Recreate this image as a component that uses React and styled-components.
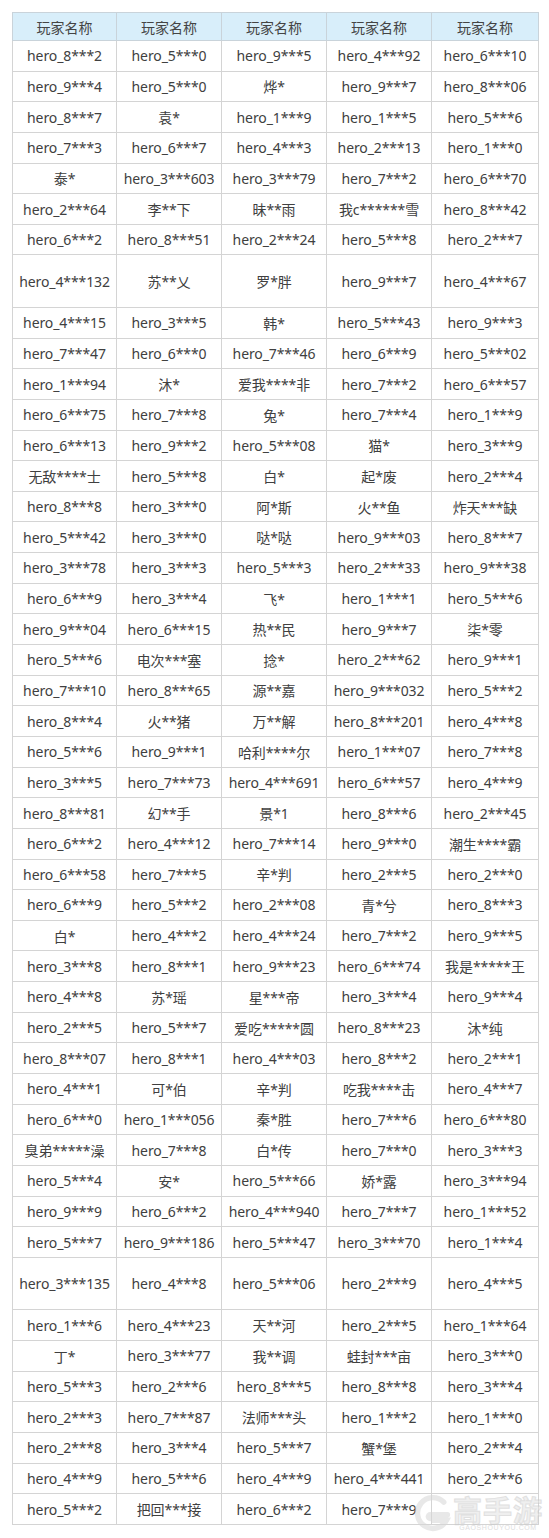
import styled, { createGlobalStyle } from "styled-components";

const GlobalStyle = createGlobalStyle`
  html, body {
    margin: 0;
    padding: 0;
    background: #fff;
  }
  body {
    font-family: "Noto Sans", "Noto Sans CJK SC", sans-serif;
  }
`;

const Page = styled.div`
  position: relative;
  width: 549px;
  height: 1538px;
  padding: 12px 0 0 12px;
  box-sizing: border-box;
  overflow: hidden;
`;

const Table = styled.table`
  border-collapse: collapse;
  table-layout: fixed;
  width: 526px;
  font-size: 14px;
  color: #404040;
`;

const HeadCell = styled.th`
  height: 27px;
  padding: 0;
  background: #d8eefa;
  border: 1px solid #c9d3da;
  font-weight: 400;
  color: #444;
  text-align: center;
`;

const Row = styled.tr`
  height: ${(p) => (p.$tall ? "52.5px" : "30.65px")};
`;

const Cell = styled.td`
  padding: 0 2px;
  border: 1px solid #d4d4d4;
  text-align: center;
  white-space: nowrap;
  letter-spacing: -0.1px;
`;

const Watermark = styled.div`
  position: absolute;
  right: 6px;
  bottom: 6px;
  display: flex;
  align-items: center;
  gap: 2px;
  opacity: 0.55;
  pointer-events: none;
`;

const MarkText = styled.div`
  display: flex;
  flex-direction: column;
  align-items: center;
`;

const MarkTitle = styled.span`
  font-family: "Noto Sans CJK SC", sans-serif;
  font-size: 29px;
  font-weight: 700;
  line-height: 28px;
  color: #e2e2e2;
  -webkit-text-stroke: 1px #c8c8c8;
  letter-spacing: 1px;
`;

const MarkUrl = styled.span`
  font-family: "Liberation Sans", sans-serif;
  font-size: 7px;
  line-height: 9px;
  color: #c4c4c4;
  letter-spacing: 0.6px;
`;

const rows = [
  ["hero_8***2", "hero_5***0", "hero_9***5", "hero_4***92", "hero_6***10"],
  ["hero_9***4", "hero_5***0", "烨*", "hero_9***7", "hero_8***06"],
  ["hero_8***7", "袁*", "hero_1***9", "hero_1***5", "hero_5***6"],
  ["hero_7***3", "hero_6***7", "hero_4***3", "hero_2***13", "hero_1***0"],
  ["泰*", "hero_3***603", "hero_3***79", "hero_7***2", "hero_6***70"],
  ["hero_2***64", "李**下", "昧**雨", "我c******雪", "hero_8***42"],
  ["hero_6***2", "hero_8***51", "hero_2***24", "hero_5***8", "hero_2***7"],
  ["hero_4***132", "苏**乂", "罗*胖", "hero_9***7", "hero_4***67", true],
  ["hero_4***15", "hero_3***5", "韩*", "hero_5***43", "hero_9***3"],
  ["hero_7***47", "hero_6***0", "hero_7***46", "hero_6***9", "hero_5***02"],
  ["hero_1***94", "沐*", "爱我****非", "hero_7***2", "hero_6***57"],
  ["hero_6***75", "hero_7***8", "兔*", "hero_7***4", "hero_1***9"],
  ["hero_6***13", "hero_9***2", "hero_5***08", "猫*", "hero_3***9"],
  ["无敌****士", "hero_5***8", "白*", "起*废", "hero_2***4"],
  ["hero_8***8", "hero_3***0", "阿*斯", "火**鱼", "炸天***缺"],
  ["hero_5***42", "hero_3***0", "哒*哒", "hero_9***03", "hero_8***7"],
  ["hero_3***78", "hero_3***3", "hero_5***3", "hero_2***33", "hero_9***38"],
  ["hero_6***9", "hero_3***4", "飞*", "hero_1***1", "hero_5***6"],
  ["hero_9***04", "hero_6***15", "热**民", "hero_9***7", "柒*零"],
  ["hero_5***6", "电次***塞", "捻*", "hero_2***62", "hero_9***1"],
  ["hero_7***10", "hero_8***65", "源**嘉", "hero_9***032", "hero_5***2"],
  ["hero_8***4", "火**猪", "万**解", "hero_8***201", "hero_4***8"],
  ["hero_5***6", "hero_9***1", "哈利****尔", "hero_1***07", "hero_7***8"],
  ["hero_3***5", "hero_7***73", "hero_4***691", "hero_6***57", "hero_4***9"],
  ["hero_8***81", "幻**手", "景*1", "hero_8***6", "hero_2***45"],
  ["hero_6***2", "hero_4***12", "hero_7***14", "hero_9***0", "潮生****霸"],
  ["hero_6***58", "hero_7***5", "辛*判", "hero_2***5", "hero_2***0"],
  ["hero_6***9", "hero_5***2", "hero_2***08", "青*兮", "hero_8***3"],
  ["白*", "hero_4***2", "hero_4***24", "hero_7***2", "hero_9***5"],
  ["hero_3***8", "hero_8***1", "hero_9***23", "hero_6***74", "我是*****王"],
  ["hero_4***8", "苏*瑶", "星***帝", "hero_3***4", "hero_9***4"],
  ["hero_2***5", "hero_5***7", "爱吃*****圆", "hero_8***23", "沐*纯"],
  ["hero_8***07", "hero_8***1", "hero_4***03", "hero_8***2", "hero_2***1"],
  ["hero_4***1", "可*伯", "辛*判", "吃我****击", "hero_4***7"],
  ["hero_6***0", "hero_1***056", "秦*胜", "hero_7***6", "hero_6***80"],
  ["臭弟*****澡", "hero_7***8", "白*传", "hero_7***0", "hero_3***3"],
  ["hero_5***4", "安*", "hero_5***66", "娇*露", "hero_3***94"],
  ["hero_9***9", "hero_6***2", "hero_4***940", "hero_7***7", "hero_1***52"],
  ["hero_5***7", "hero_9***186", "hero_5***47", "hero_3***70", "hero_1***4"],
  ["hero_3***135", "hero_4***8", "hero_5***06", "hero_2***9", "hero_4***5", true],
  ["hero_1***6", "hero_4***23", "天**河", "hero_2***5", "hero_1***64"],
  ["丁*", "hero_3***77", "我**调", "蛙封***亩", "hero_3***0"],
  ["hero_5***3", "hero_2***6", "hero_8***5", "hero_8***8", "hero_3***4"],
  ["hero_2***3", "hero_7***87", "法师***头", "hero_1***2", "hero_1***0"],
  ["hero_2***8", "hero_3***4", "hero_5***7", "蟹*堡", "hero_2***4"],
  ["hero_4***9", "hero_5***6", "hero_4***9", "hero_4***441", "hero_2***6"],
  ["hero_5***2", "把回***接", "hero_6***2", "hero_7***9", ""],
];

const colWidths = [104, 105, 105, 105, 107];

function LogoMark() {
  return (
    <svg width="38" height="38" viewBox="0 0 42 42">
      <path
        d="M34 9 A17 17 0 1 0 37 29 L24 29 L24 23 L38 23"
        fill="none"
        stroke="#d6d6d6"
        strokeWidth="6"
        strokeLinecap="round"
      />
      <circle cx="19" cy="25" r="5" fill="#d6d6d6" />
    </svg>
  );
}

export default function App() {
  return (
    <>
      <GlobalStyle />
      <Page>
        <Table>
          <colgroup>
            {colWidths.map((w, i) => (
              <col key={i} style={{ width: w }} />
            ))}
          </colgroup>
          <thead>
            <tr>
              {colWidths.map((_, i) => (
                <HeadCell key={i}>玩家名称</HeadCell>
              ))}
            </tr>
          </thead>
          <tbody>
            {rows.map((r, i) => (
              <Row key={i} $tall={r[5] === true}>
                {r.slice(0, 5).map((name, j) => (
                  <Cell key={j}>{name}</Cell>
                ))}
              </Row>
            ))}
          </tbody>
        </Table>
        <Watermark>
          <LogoMark />
          <MarkText>
            <MarkTitle>高手游</MarkTitle>
            <MarkUrl>GAOSHOUYOU.COM</MarkUrl>
          </MarkText>
        </Watermark>
      </Page>
    </>
  );
}
